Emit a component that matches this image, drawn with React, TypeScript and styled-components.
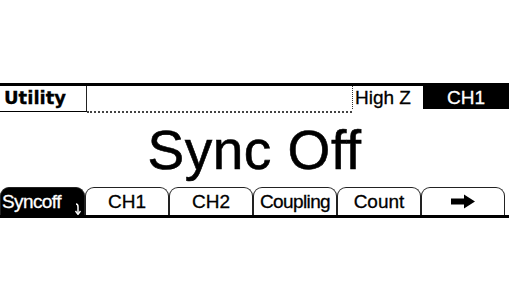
import React from "react";
import styled, { createGlobalStyle } from "styled-components";

const Global = createGlobalStyle`
  html, body { margin: 0; padding: 0; background: #fff; }
  body { font-family: "Liberation Sans", Arial, sans-serif; }
`;

const Screen = styled.div`
  width: 509px;
  margin-top: 83px;
  display: flex;
  flex-direction: column;
`;

const TopBar = styled.div`
  display: flex;
  height: 26px;
  border-top: 3px solid #000;
`;

const Title = styled.div`
  width: 87px;
  border-right: 1px solid #222;
  border-bottom: 1px solid #000;
  font-family: "DejaVu Sans", Verdana, sans-serif;
  font-weight: bold;
  font-size: 18px;
  line-height: 23px;
  padding-left: 4px;
  box-sizing: border-box;
  color: #000;
  -webkit-text-stroke: 0.3px #000;
`;

const Filler = styled.div`
  flex: 1;
  border-bottom: 2px dotted #444;
  margin-bottom: -1px;
`;

const Status = styled.div<{ $dark?: boolean }>`
  width: ${(p) => (p.$dark ? "86px" : "71px")};
  box-sizing: border-box;
  font-size: 19px;
  line-height: 23px;
  height: 23px;
  background: ${(p) => (p.$dark ? "#000" : "#fff")};
  color: ${(p) => (p.$dark ? "#fff" : "#000")};
  border-left: ${(p) => (p.$dark ? "none" : "1px dotted #333")};
  padding-left: ${(p) => (p.$dark ? "0" : "2px")};
  text-align: ${(p) => (p.$dark ? "center" : "left")};
  -webkit-text-stroke: 0.3px ${(p) => (p.$dark ? "#fff" : "#000")};
`;

const Main = styled.div`
  height: 75px;
  display: flex;
  align-items: center;
  justify-content: center;
  font-size: 55px;
  color: #000;
  letter-spacing: 0.5px;
  -webkit-text-stroke: 0.6px #000;
`;

const TabRow = styled.div`
  display: flex;
  height: 28px;
  border-bottom: 3px solid #000;
  padding-right: 4px;
`;

const Tab = styled.div<{ $active?: boolean }>`
  flex: 1;
  position: relative;
  box-sizing: border-box;
  border: 1px solid #222;
  border-bottom: none;
  border-radius: 9px 9px 0 0;
  background: ${(p) => (p.$active ? "#000" : "#fff")};
  color: ${(p) => (p.$active ? "#fff" : "#000")};
  font-size: 19px;
  line-height: 27px;
  text-align: center;
  white-space: nowrap;
  overflow: hidden;
  -webkit-text-stroke: 0.3px ${(p) => (p.$active ? "#fff" : "#000")};
`;

const Arrow = styled.svg`
  vertical-align: -1px;
`;

const DownHook = styled.svg`
  position: absolute;
  right: 2px;
  bottom: 0px;
`;

export default function App() {
  return (
    <>
      <Global />
      <Screen>
        <TopBar>
          <Title>Utility</Title>
          <Filler />
          <Status>High Z</Status>
          <Status $dark>CH1</Status>
        </TopBar>
        <Main>Sync Off</Main>
        <TabRow>
          <Tab $active style={{ textAlign: "left", paddingLeft: 1, letterSpacing: "-0.6px" }}>
            Syncoff
            <DownHook width="8" height="12" viewBox="0 0 8 12">
              <path d="M2 1 Q4 1 4 4 L4 10" stroke="#fff" strokeWidth="1.5" fill="none" />
              <path d="M1.5 8 L4 11.5 L6.5 8" stroke="#fff" strokeWidth="1.3" fill="none" />
            </DownHook>
          </Tab>
          <Tab>CH1</Tab>
          <Tab>CH2</Tab>
          <Tab style={{ letterSpacing: "-0.6px" }}>Coupling</Tab>
          <Tab>Count</Tab>
          <Tab>
            <Arrow width="26" height="15" viewBox="0 0 26 15">
              <path d="M1 4.5 H14 V0.5 L25 7.5 L14 14.5 V10.5 H1 Z" fill="#000" />
            </Arrow>
          </Tab>
        </TabRow>
      </Screen>
    </>
  );
}
